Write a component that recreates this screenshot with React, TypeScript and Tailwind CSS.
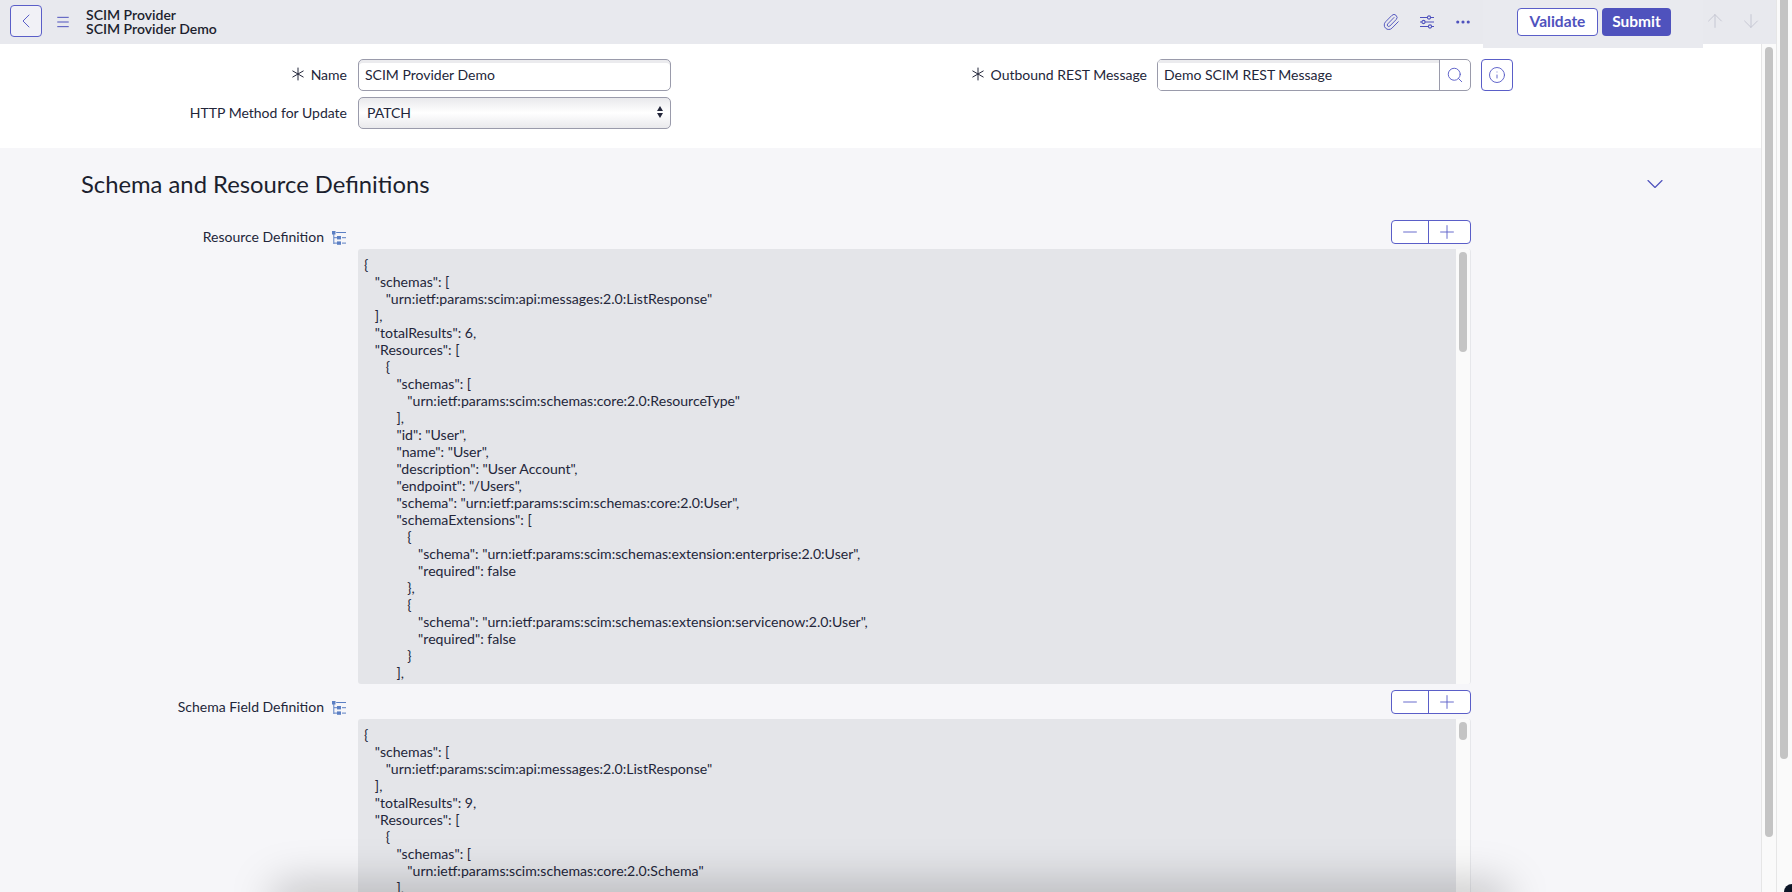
import { Asterisk, ChevronDown, ChevronLeft, Ellipsis, Info, Menu, Minus, Paperclip, Plus, Search, ArrowUp, ArrowDown } from 'lucide-react';

const RESOURCE_JSON = `{
   "schemas": [
      "urn:ietf:params:scim:api:messages:2.0:ListResponse"
   ],
   "totalResults": 6,
   "Resources": [
      {
         "schemas": [
            "urn:ietf:params:scim:schemas:core:2.0:ResourceType"
         ],
         "id": "User",
         "name": "User",
         "description": "User Account",
         "endpoint": "/Users",
         "schema": "urn:ietf:params:scim:schemas:core:2.0:User",
         "schemaExtensions": [
            {
               "schema": "urn:ietf:params:scim:schemas:extension:enterprise:2.0:User",
               "required": false
            },
            {
               "schema": "urn:ietf:params:scim:schemas:extension:servicenow:2.0:User",
               "required": false
            }
         ],`;

const SCHEMA_JSON = `{
   "schemas": [
      "urn:ietf:params:scim:api:messages:2.0:ListResponse"
   ],
   "totalResults": 9,
   "Resources": [
      {
         "schemas": [
            "urn:ietf:params:scim:schemas:core:2.0:Schema"
         ],`;

function TreeIcon() {
  return (
    <svg width="14" height="15" viewBox="0 0 14 15" className="mt-[3px] shrink-0 text-[#5b7fc4]" fill="currentColor">
      <rect x="0" y="0" width="3.5" height="3.5" />
      <rect x="1.3" y="3" width="1" height="10" />
      <rect x="2" y="6.2" width="3" height="1" />
      <rect x="2" y="11.6" width="3" height="1" />
      <rect x="5" y="5" width="4" height="3.4" />
      <rect x="5" y="10.4" width="4" height="3.4" />
      <rect x="4.2" y="1" width="9.8" height="1" />
      <rect x="10" y="6.2" width="4" height="1" />
      <rect x="10" y="11.6" width="4" height="1" />
    </svg>
  );
}

function StepButtons() {
  return (
    <div className="flex h-6 w-[80px] self-end rounded-[4px] border border-[#5a5ec8] bg-white text-[#5a5ec8]">
      <div className="flex w-[37px] items-center justify-center border-r border-[#5a5ec8]">
        <Minus size={22} strokeWidth={1} />
      </div>
      <div className="flex flex-1 items-center justify-center pr-[5px]">
        <Plus size={22} strokeWidth={1} />
      </div>
    </div>
  );
}

function JsonField({ label, json, thumb, boxHeight }: { label: string; json: string; thumb: string; boxHeight: string }) {
  return (
    <div className="flex">
      <div className="flex w-[347px] items-start justify-end gap-2 pr-[1px] pt-[8px]">
        <span className="text-[14px] leading-[17px] text-[#23263a]">{label}</span>
        <TreeIcon />
      </div>
      <div className="ml-[11px] flex w-[1113px] flex-col gap-[5px]">
        <StepButtons />
        <div className={`flex overflow-hidden rounded-[3px] border-r border-[#e6e7eb] ${boxHeight}`}>
          <pre className="flex-1 overflow-hidden bg-[#e4e5e9] px-[6px] pt-[7px] font-['Lato',sans-serif] text-[14.1px] leading-[17px] text-[#23263a]">
            {json}
          </pre>
          <div className="w-[14px] shrink-0 bg-[#fafafa] px-[3px] pt-[3px]">
            <div className={`w-2 rounded-full bg-[#c4c4c4] ${thumb}`} />
          </div>
        </div>
      </div>
    </div>
  );
}

export default function App() {
  return (
    <div className="relative flex h-[892px] w-[1792px] overflow-hidden bg-[#fafafa] font-['Lato',sans-serif] text-[#23263a]">
      <div className="flex w-[1777px] flex-col border-r border-[#e6e6e6]">
        {/* Header bar */}
        <header className="relative flex h-11 shrink-0 items-center bg-[#e8e9ee] pl-[10px]">
          <button className="mb-[2px] flex h-8 w-8 items-center justify-center rounded-[4px] border border-[#5a5ec8] bg-[#f1f1f6] text-[#5a5ec8]">
            <ChevronLeft size={24} strokeWidth={1} />
          </button>
          <Menu size={16} strokeWidth={1.5} className="ml-[13px] text-[#4f52bd]" />
          <div className="ml-[15px] text-[14px] font-semibold leading-[14px] text-[#1c1f2e]">
            <div>SCIM Provider</div>
            <div>SCIM Provider Demo</div>
          </div>
          <div className="ml-auto flex items-center gap-[19px] pr-[304px] text-[#4f52bd]">
            <Paperclip size={18} strokeWidth={1.25} />
            <svg width="16" height="14" viewBox="0 0 16 14" fill="none" stroke="currentColor" strokeWidth="1.1">
              <path d="M1 2.5H15M1 7H15M1 11.5H15" />
              <circle cx="10" cy="2.5" r="1.6" fill="#e8e9ee" />
              <circle cx="4.5" cy="7" r="1.6" fill="#e8e9ee" />
              <circle cx="11" cy="11.5" r="1.6" fill="#e8e9ee" />
            </svg>
            <Ellipsis size={18} strokeWidth={2.2} />
          </div>
          {/* Action panel hangs below the header */}
          <div className="absolute left-[1483px] top-0 flex h-[48px] w-[220px] items-start gap-1 bg-[#e9eaef] pl-[34px] pt-[8px]">
            <button className="h-7 w-[81px] rounded-[4px] border border-[#5a5ec8] bg-white text-[15.5px] font-bold text-[#4f52bd]">Validate</button>
            <button className="h-7 w-[69px] rounded-[4px] bg-[#4f52bd] text-[15.5px] font-bold text-white">Submit</button>
          </div>
          <ArrowUp size={22} strokeWidth={1} className="absolute left-[1704px] top-[10px] text-[#c3c4d0]" />
          <ArrowDown size={22} strokeWidth={1} className="absolute left-[1740px] top-[10px] text-[#c3c4d0]" />
        </header>

        <div className="flex min-h-0 flex-1">
          <main className="min-w-0 flex-1 overflow-hidden bg-[#f6f6f9]">
            {/* Form fields */}
            <section className="flex h-[104px] flex-col gap-[6px] bg-white pt-[15px]">
              <div className="flex items-center">
                <div className="flex w-[347px] items-center justify-end pb-[2px] text-[14px]">
                  <Asterisk size={24} strokeWidth={1} className="mr-[1px]" />
                  <span>Name</span>
                </div>
                <input
                  readOnly
                  value="SCIM Provider Demo"
                  className="ml-[11px] h-8 w-[313px] rounded-[5px] border border-[#9a9bab] bg-white px-[6px] pb-[2px] text-[14px] text-[#23263a] shadow-[inset_0_3px_0_#ebebee] outline-none"
                />
                <div className="flex w-[476px] items-center justify-end pb-[2px] text-[14px]">
                  <Asterisk size={24} strokeWidth={1} className="mr-[1px]" />
                  <span>Outbound REST Message</span>
                </div>
                <div className="ml-[10px] flex h-8 w-[314px] overflow-hidden rounded-[5px] border border-[#9a9bab] bg-white">
                  <input
                    readOnly
                    value="Demo SCIM REST Message"
                    className="min-w-0 flex-1 bg-white px-[6px] pb-[2px] text-[14px] text-[#23263a] shadow-[inset_0_3px_0_#ebebee] outline-none"
                  />
                  <div className="flex w-[31px] items-center justify-center border-l border-[#9a9bab] text-[#5a5ec8]">
                    <Search size={18} strokeWidth={1.25} />
                  </div>
                </div>
                <button className="ml-[10px] flex h-8 w-8 items-center justify-center rounded-[4px] border border-[#5a5ec8] text-[#5a5ec8]">
                  <Info size={18} strokeWidth={1.25} />
                </button>
              </div>
              <div className="flex items-center">
                <div className="w-[347px] pb-[2px] text-right text-[14px]">HTTP Method for Update</div>
                <div className="relative ml-[11px] h-8 w-[313px]">
                  <select className="h-full w-full appearance-none rounded-[5px] border border-[#9a9bab] bg-gradient-to-b from-[#e9e9ec] via-white to-[#e9e9ec] px-[8px] pb-[2px] text-[14px] text-[#23263a] outline-none">
                    <option>PATCH</option>
                  </select>
                  <svg width="6" height="12" viewBox="0 0 6 12" className="absolute right-[8px] top-[9px] text-[#23263a]" fill="currentColor">
                    <path d="M3 0 6 5H0Z" />
                    <path d="M3 12 0 7H6Z" />
                  </svg>
                </div>
              </div>
            </section>

            <section>
              <div className="flex h-[72px] items-center justify-between pl-[81px] pr-[92px]">
                <h2 className="text-[23.8px] font-normal leading-[30px] text-[#1c1f2e]">Schema and Resource Definitions</h2>
                <ChevronDown size={28} strokeWidth={1} className="text-[#4f52bd]" />
              </div>
              <JsonField label="Resource Definition" json={RESOURCE_JSON} thumb="h-[100px]" boxHeight="h-[435px]" />
              <div className="mt-[6px]">
                <JsonField label="Schema Field Definition" json={SCHEMA_JSON} thumb="h-[18px]" boxHeight="h-[300px]" />
              </div>
            </section>
          </main>
          {/* Inner scrollbar */}
          <div className="w-[15px] shrink-0 border-l border-[#e6e6e6] bg-[#fafafa] pl-[3px] pt-[3px]">
            <div className="h-[790px] w-2 rounded-full bg-[#c4c4c4]" />
          </div>
        </div>
      </div>
      {/* Outer scrollbar */}
      <div className="flex-1 pl-[3px]">
        <div className="h-[759px] w-2 rounded-b-full bg-[#c4c4c4]" />
      </div>
      {/* Shadow from the window below */}
      <div className="pointer-events-none absolute bottom-[-30px] left-[270px] h-[40px] w-[1240px] rounded-full bg-black/20 blur-[20px]" />
      <div className="absolute bottom-0 right-0 h-2 w-2 rounded-tl-[8px] bg-[#0c1526]" />
    </div>
  );
}
